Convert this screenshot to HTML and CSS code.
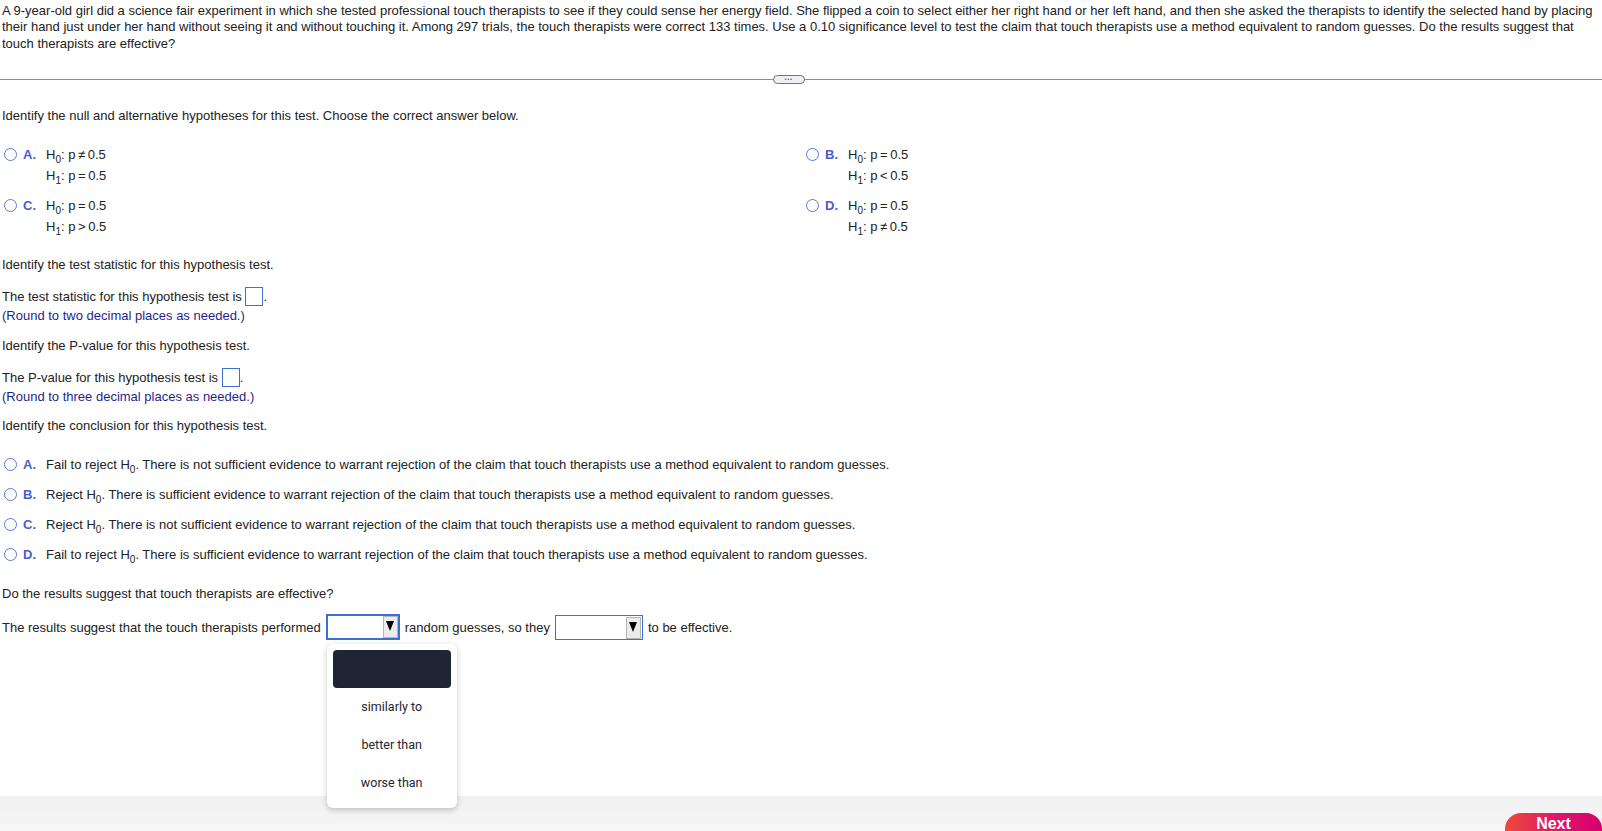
FILE: index.html
```html
<!DOCTYPE html>
<html lang="en">
<head>
    <meta charset="UTF-8">
    <title>Question</title>
    <link rel="stylesheet" href="styles.css">
</head>
<body>

<div class="page">
    <p class="stem">A 9-year-old girl did a science fair experiment in which she tested professional touch therapists to see if they could sense her energy field. She flipped a coin to select either her right hand or her left hand, and then she asked the therapists to identify the selected hand by placing their hand just under her hand without seeing it and without touching it. Among 297 trials, the touch therapists were correct 133 times. Use a 0.10 significance level to test the claim that touch therapists use a method equivalent to random guesses. Do the results suggest that touch therapists are effective?</p>

    <div class="divider"><span class="pill">•••</span></div>

    <p class="prompt first">Identify the null and alternative hypotheses for this test. Choose the correct answer below.</p>

    <div class="hyp-grid">
        <label class="hyp">
            <span class="radio"></span><span class="letter">A.</span>
            <span class="lines">
                <span>H<sub>0</sub>: p&#8201;&#8800;&#8201;0.5</span>
                <span>H<sub>1</sub>: p&#8201;=&#8201;0.5</span>
            </span>
        </label>
        <label class="hyp">
            <span class="radio"></span><span class="letter">B.</span>
            <span class="lines">
                <span>H<sub>0</sub>: p&#8201;=&#8201;0.5</span>
                <span>H<sub>1</sub>: p&#8201;&lt;&#8201;0.5</span>
            </span>
        </label>
        <label class="hyp">
            <span class="radio"></span><span class="letter">C.</span>
            <span class="lines">
                <span>H<sub>0</sub>: p&#8201;=&#8201;0.5</span>
                <span>H<sub>1</sub>: p&#8201;&gt;&#8201;0.5</span>
            </span>
        </label>
        <label class="hyp">
            <span class="radio"></span><span class="letter">D.</span>
            <span class="lines">
                <span>H<sub>0</sub>: p&#8201;=&#8201;0.5</span>
                <span>H<sub>1</sub>: p&#8201;&#8800;&#8201;0.5</span>
            </span>
        </label>
    </div>

    <p class="prompt stat">Identify the test statistic for this hypothesis test.</p>
    <div class="answer">
        <div>The test statistic for this hypothesis test is <span class="box"></span>.</div>
        <div class="hint">(Round to two decimal places as needed.)</div>
    </div>

    <p class="prompt pval">Identify the P-value for this hypothesis test.</p>
    <div class="answer">
        <div>The P-value for this hypothesis test is <span class="box"></span>.</div>
        <div class="hint">(Round to three decimal places as needed.)</div>
    </div>

    <p class="prompt concl">Identify the conclusion for this hypothesis test.</p>

    <div class="conclusions">
        <label class="choice"><span class="radio"></span><span class="letter">A.</span><span>Fail to reject H<sub>0</sub>. There is not sufficient evidence to warrant rejection of the claim that touch therapists use a method equivalent to random guesses.</span></label>
        <label class="choice"><span class="radio"></span><span class="letter">B.</span><span>Reject H<sub>0</sub>. There is sufficient evidence to warrant rejection of the claim that touch therapists use a method equivalent to random guesses.</span></label>
        <label class="choice"><span class="radio"></span><span class="letter">C.</span><span>Reject H<sub>0</sub>. There is not sufficient evidence to warrant rejection of the claim that touch therapists use a method equivalent to random guesses.</span></label>
        <label class="choice"><span class="radio"></span><span class="letter">D.</span><span>Fail to reject H<sub>0</sub>. There is sufficient evidence to warrant rejection of the claim that touch therapists use a method equivalent to random guesses.</span></label>
    </div>

    <p class="prompt effective">Do the results suggest that touch therapists are effective?</p>

    <div class="sentence">
        <span>The results suggest that the touch therapists performed</span>
        <span class="select-wrap">
            <span class="select focused"><span class="arrow"></span></span>
            <div class="menu">
                <div class="menu-head"></div>
                <div class="menu-item">similarly to</div>
                <div class="menu-item">better than</div>
                <div class="menu-item">worse than</div>
            </div>
        </span>
        <span>random guesses, so they</span>
        <span class="select wide"><span class="arrow"></span></span>
        <span>to be effective.</span>
    </div>
</div>

<div class="footer">
    <button class="next">Next</button>
</div>

</body>
</html>
```

FILE: styles.css
```css
* {
    box-sizing: border-box;
}

body {
    margin: 0;
    font-family: "Liberation Sans", Arial, sans-serif;
    font-size: 13px;
    color: #222;
    background: #fff;
    height: 831px;
    overflow: hidden;
    display: flex;
    flex-direction: column;
}

.page {
    flex: 1;
    padding: 3px 6px 0 2px;
}

p {
    margin: 0;
}

.stem {
    line-height: 16.4px;
}

.divider {
    position: relative;
    margin: 27px -6px 0 -2px;
    height: 1px;
    background: #8a8f99;
}

.pill {
    position: absolute;
    left: 773px;
    top: -4px;
    width: 32px;
    height: 9px;
    border: 1px solid #6b7280;
    border-radius: 5px;
    background: #eef0f3;
    color: #4b5563;
    font-size: 5px;
    line-height: 7px;
    letter-spacing: 1px;
    text-align: center;
}

.prompt {
    line-height: 16px;
}

.prompt.first {
    margin-top: 28px;
}

.radio {
    display: inline-block;
    width: 13px;
    height: 13px;
    border: 1px solid #5b78d6;
    border-radius: 50%;
    background: #fff;
    margin-right: 6px;
    flex-shrink: 0;
}

.letter {
    color: #4a5ccc;
    font-weight: bold;
    width: 23px;
    flex-shrink: 0;
}

sub {
    font-size: 10px;
    vertical-align: -4px;
    line-height: 0;
}

.hyp-grid {
    margin-top: 20px;
    display: grid;
    grid-template-columns: 802px 1fr;
    row-gap: 9px;
    padding-left: 2px;
}

.hyp {
    display: flex;
    align-items: flex-start;
    line-height: 21px;
}

.hyp .radio {
    margin-top: 4px;
}

.lines {
    display: flex;
    flex-direction: column;
}

.prompt.stat {
    margin-top: 20px;
}

.answer {
    margin-top: 14px;
    line-height: 19px;
}

.hint {
    color: #1f1f8f;
}

.box {
    display: inline-block;
    width: 18px;
    height: 19px;
    border: 1px solid #3b6fd4;
    vertical-align: -5px;
    background: #fff;
}

.prompt.pval {
    margin-top: 12.5px;
}

.prompt.concl {
    margin-top: 12px;
}

.conclusions {
    margin-top: 22px;
    display: flex;
    flex-direction: column;
    gap: 13px;
    padding-left: 2px;
}

.choice {
    display: flex;
    align-items: center;
    line-height: 17px;
}

.prompt.effective {
    margin-top: 23.5px;
}

.sentence {
    margin-top: 12px;
    display: flex;
    align-items: center;
    gap: 5px;
}

.select-wrap {
    position: relative;
    display: inline-flex;
}

.select {
    display: inline-flex;
    justify-content: flex-end;
    align-items: flex-start;
    width: 74px;
    height: 26px;
    border: 1px solid #3b6fd4;
    background: #fff;
    padding: 1px;
}

.select.focused {
    border: 2px solid #3b6fd4;
    padding: 0;
}

.select.wide {
    width: 88px;
    height: 25px;
}

.arrow {
    position: relative;
    width: 15px;
    height: 22px;
    background: #ebebeb;
    border: 1px solid #b5b5b5;
}

.arrow::after {
    content: "";
    position: absolute;
    left: 2px;
    top: 4px;
    border-left: 4.5px solid transparent;
    border-right: 4.5px solid transparent;
    border-top: 10px solid #000;
}

.menu {
    position: absolute;
    left: 1px;
    top: 30px;
    width: 130px;
    padding: 6px 6px 6px;
    background: #fff;
    border-radius: 6px;
    box-shadow: 0 2px 6px rgba(0, 0, 0, 0.22);
    font-family: Roboto, "Liberation Sans", sans-serif;
    font-size: 12.5px;
    color: #1f2533;
    z-index: 2;
}

.menu-head {
    height: 38px;
    background: #1f2533;
    border-radius: 4px;
}

.menu-item {
    height: 38px;
    line-height: 38px;
    text-align: center;
}

.menu-item:first-of-type {
    margin-top: 1px;
}

.footer {
    height: 35px;
    background: linear-gradient(#f1f1f1, #f6f6f6);
    display: flex;
    justify-content: flex-end;
    align-items: flex-start;
    padding-top: 17px;
    overflow: hidden;
}

.next {
    width: 97px;
    height: 34px;
    border: none;
    border-radius: 16px;
    background: linear-gradient(90deg, #ee4a3a, #e0136a 55%, #d6006e);
    color: #fff;
    font-family: "Liberation Sans", Arial, sans-serif;
    font-weight: bold;
    font-size: 16px;
    padding: 0 0 12px;
    line-height: 18px;
}
```
